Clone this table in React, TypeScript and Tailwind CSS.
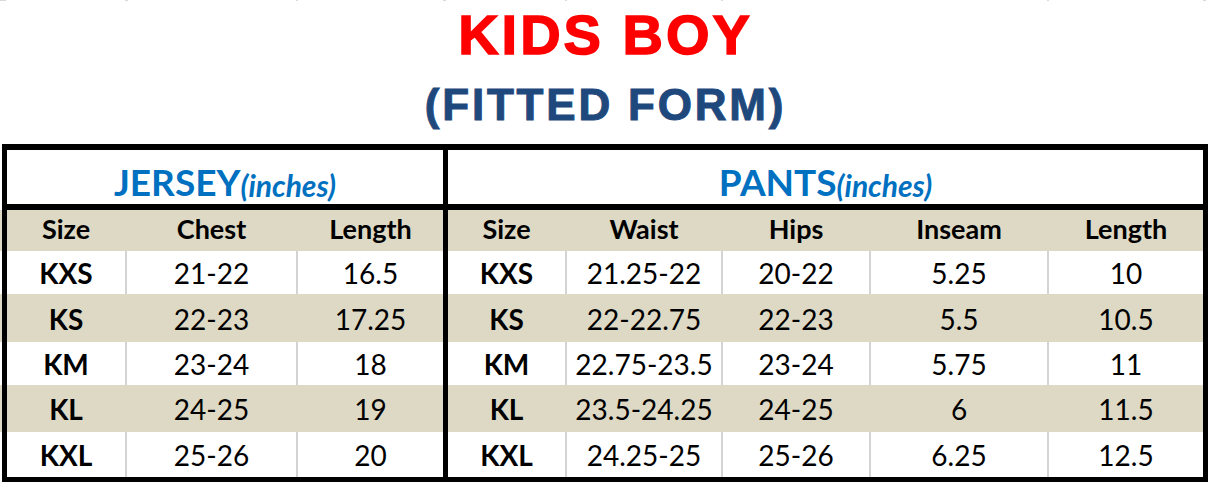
import clsx from "clsx";

const jerseyHead = ["Size", "Chest", "Length"];
const pantsHead = ["Size", "Waist", "Hips", "Inseam", "Length"];

const jerseyRows = [
  ["KXS", "21-22", "16.5"],
  ["KS", "22-23", "17.25"],
  ["KM", "23-24", "18"],
  ["KL", "24-25", "19"],
  ["KXL", "25-26", "20"],
];

const pantsRows = [
  ["KXS", "21.25-22", "20-22", "5.25", "10"],
  ["KS", "22-22.75", "22-23", "5.5", "10.5"],
  ["KM", "22.75-23.5", "23-24", "5.75", "11"],
  ["KL", "23.5-24.25", "24-25", "6", "11.5"],
  ["KXL", "24.25-25", "25-26", "6.25", "12.5"],
];

const rowHeights = ["h-[43px]", "h-[48px]", "h-[43px]", "h-[47px]", "h-[45px]"];

const jerseyW = ["w-[118px]", "w-[171px]", "w-[147px]"];
const pantsW = ["w-[117px]", "w-[156px]", "w-[148px]", "w-[178px]", "w-[156px]"];

type CellsProps = { values: string[]; widths: string[]; beige: boolean; head?: boolean };

const Cells = ({ values, widths, beige, head }: CellsProps) => (
  <>
    {values.map((v, i) => (
      <div
        key={i}
        className={clsx(
          widths[i],
          "flex items-center justify-center",
          i > 0 && "border-l-2",
          i > 0 && (beige ? "border-[#ddd9c4]" : "border-[#d4d4d4]"),
          (head || i === 0) && "font-bold",
          head ? "text-[27px] pb-[3px]" : "text-[28px] pt-[1px]"
        )}
      >
        {v}
      </div>
    ))}
  </>
);

const Row = ({
  jersey,
  pants,
  beige,
  height,
  head,
}: {
  jersey: string[];
  pants: string[];
  beige: boolean;
  height: string;
  head?: boolean;
}) => (
  <div className={clsx("flex", height, beige ? "bg-[#ddd9c4]" : "bg-white")}>
    <div className="w-[2px]" />
    <div className="w-[5px] bg-black" />
    <Cells values={jersey} widths={jerseyW} beige={beige} head={head} />
    <div className="w-[5px] bg-black" />
    <Cells values={pants} widths={pantsW} beige={beige} head={head} />
    <div className="w-[5px] bg-black" />
  </div>
);

const SectionTitle = ({ name }: { name: string }) => (
  <div className="flex items-center justify-center pt-[4px] text-[#0070c0]">
    <span className="text-[37px] font-bold">{name}</span>
    <span className="text-[30px] font-bold italic mt-[8px]">(inches)</span>
  </div>
);

export default function App() {
  return (
    <div className="w-[1208px] h-[482px] overflow-hidden bg-white font-['Lato',sans-serif] text-black">
      {/* faint column marks along the top edge */}
      <div className="flex h-px">
        <div className="w-[6px] bg-[#d9d9d9]" />
        <div className="w-[119px]" />
        <div className="w-[3px] bg-[#d9d9d9]" />
        <div className="w-[168px]" />
        <div className="w-[2px] bg-[#d9d9d9]" />
        <div className="w-[145px]" />
        <div className="w-[3px] bg-[#d9d9d9]" />
        <div className="w-[119px]" />
        <div className="w-[2px] bg-[#d9d9d9]" />
        <div className="w-[154px]" />
        <div className="w-[2px] bg-[#d9d9d9]" />
        <div className="w-[324px]" />
        <div className="w-[2px] bg-[#d9d9d9]" />
        <div className="w-[154px]" />
        <div className="w-[3px] bg-[#d9d9d9]" />
      </div>

      <div className="h-[143px] flex flex-col items-center font-['Liberation_Sans',Arial,sans-serif] font-bold">
        <div className="mt-[6px] pl-[3px] text-[56px] leading-[56px] tracking-[3px] text-[#ff0000] [-webkit-text-stroke:1.5px_#ff0000]">
          KIDS BOY
        </div>
        <div className="mt-[20px] pl-[3px] text-[44px] leading-[44px] tracking-[2.8px] text-[#1f497d] [-webkit-text-stroke:1px_#1f497d]">
          (FITTED FORM)
        </div>
      </div>

      <div className="ml-[2px] h-[6px] bg-black" />
      <div className="flex h-[54px] bg-white">
        <div className="w-[2px]" />
        <div className="w-[5px] bg-black" />
        <div className="w-[436px]">
          <SectionTitle name="JERSEY" />
        </div>
        <div className="w-[5px] bg-black" />
        <div className="w-[755px]">
          <SectionTitle name="PANTS" />
        </div>
        <div className="w-[5px] bg-black" />
      </div>
      <div className="ml-[2px] h-[6px] bg-black" />

      <Row jersey={jerseyHead} pants={pantsHead} beige height="h-[41px]" head />
      {jerseyRows.map((r, i) => (
        <Row key={i} jersey={r} pants={pantsRows[i]} beige={i % 2 === 1} height={rowHeights[i]} />
      ))}
      <div className="ml-[2px] h-[5px] bg-black" />
    </div>
  );
}
